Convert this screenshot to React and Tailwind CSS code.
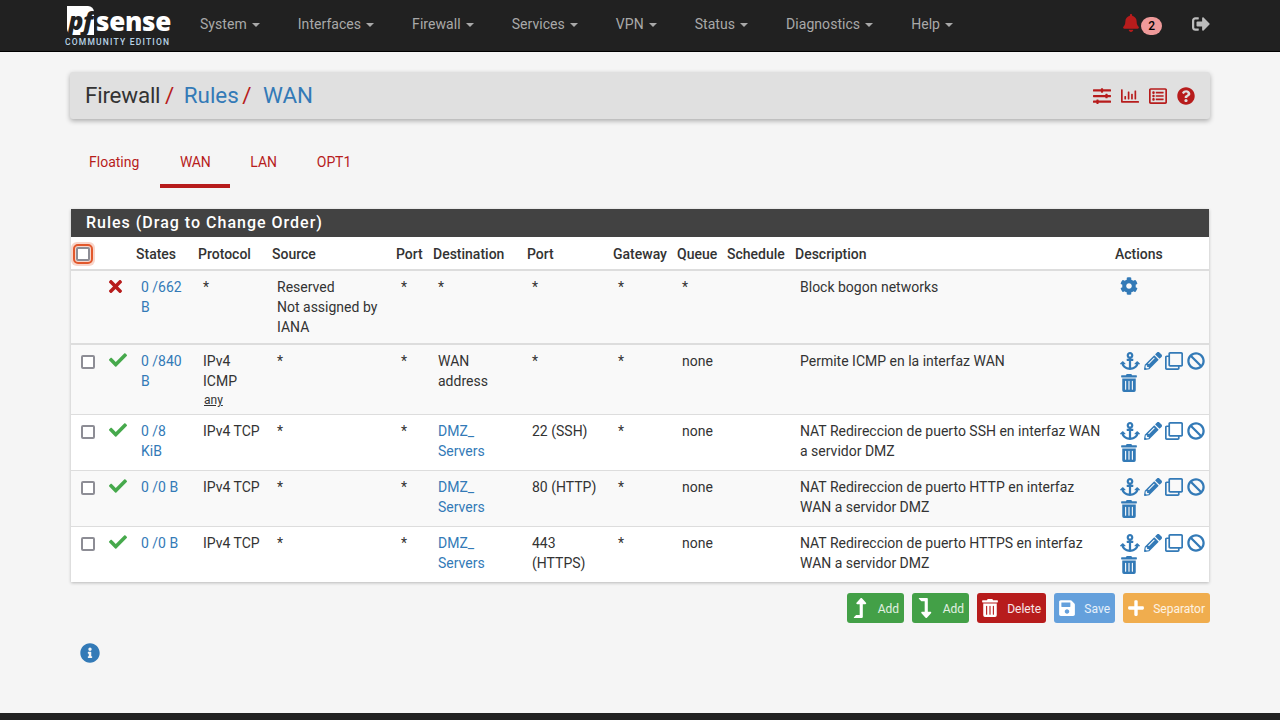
import {
  FaAnchor, FaBan, FaBell, FaCheck, FaCog, FaInfoCircle, FaLevelDownAlt, FaLevelUpAlt, FaPencilAlt,
  FaPlus, FaQuestionCircle, FaRegClone, FaRegListAlt, FaRegChartBar, FaSave, FaSignOutAlt, FaSlidersH, FaTimes, FaTrashAlt,
} from 'react-icons/fa'

const navItems = ['System', 'Interfaces', 'Firewall', 'Services', 'VPN', 'Status', 'Diagnostics', 'Help']

const tabs = ['Floating', 'WAN', 'LAN', 'OPT1']

const columns = [
  ['', 'w-[32px]'],
  ['', 'w-[28px]'],
  ['States', 'w-[62px]'],
  ['Protocol', 'w-[74px]'],
  ['Source', 'w-[124px]'],
  ['Port', 'w-[37px]'],
  ['Destination', 'w-[94px]'],
  ['Port', 'w-[86px]'],
  ['Gateway', 'w-[64px]'],
  ['Queue', 'w-[50px]'],
  ['Schedule', 'w-[68px]'],
  ['Description', 'w-[320px]'],
  ['Actions', 'w-[99px]'],
]

const rules = [
  {
    blocked: true,
    states: ['0 /662', 'B'],
    protocol: ['*'],
    source: ['Reserved', 'Not assigned by', 'IANA'],
    dest: ['*'],
    port: ['*'],
    queue: '*',
    description: 'Block bogon networks',
    border: 'border-b-2 border-[#dddddd]',
    bg: 'bg-[#f9f9f9]',
  },
  {
    states: ['0 /840', 'B'],
    protocol: ['IPv4', 'ICMP'],
    any: true,
    source: ['*'],
    dest: ['WAN', 'address'],
    port: ['*'],
    queue: 'none',
    description: 'Permite ICMP en la interfaz WAN',
    bg: 'bg-[#f9f9f9]',
  },
  {
    states: ['0 /8', 'KiB'],
    protocol: ['IPv4 TCP'],
    source: ['*'],
    dest: ['DMZ_', 'Servers'],
    destLink: true,
    port: ['22 (SSH)'],
    queue: 'none',
    description: 'NAT Redireccion de puerto SSH en interfaz WAN a servidor DMZ',
    bg: 'bg-white',
  },
  {
    states: ['0 /0 B'],
    protocol: ['IPv4 TCP'],
    source: ['*'],
    dest: ['DMZ_', 'Servers'],
    destLink: true,
    port: ['80 (HTTP)'],
    queue: 'none',
    description: 'NAT Redireccion de puerto HTTP en interfaz WAN a servidor DMZ',
    bg: 'bg-[#f9f9f9]',
  },
  {
    states: ['0 /0 B'],
    protocol: ['IPv4 TCP'],
    source: ['*'],
    dest: ['DMZ_', 'Servers'],
    destLink: true,
    port: ['443', '(HTTPS)'],
    queue: 'none',
    description: 'NAT Redireccion de puerto HTTPS en interfaz WAN a servidor DMZ',
    border: 'border-b-0',
    bg: 'bg-white',
  },
]

function Lines({ items }) {
  return items.map((line) => <div key={line}>{line}</div>)
}

function Logo() {
  return (
    <div className="flex flex-col w-[106px] ml-[65px] pt-[6px]">
      <div className="flex items-center h-[29px] pl-[2px]">
        <span className="flex items-center justify-center w-[28px] h-[29px] pb-[2px] bg-white text-[#212121] text-[25px] leading-[26px] font-extrabold italic tracking-[-0.5px] rounded-tr-[6px] rounded-bl-[6px] [font-family:'Open_Sans',sans-serif]">
          pf
        </span>
        <span className="text-white text-[26px] leading-none font-extrabold ml-[2px] tracking-[-0.3px] [font-family:'Open_Sans',sans-serif]">
          sense
        </span>
      </div>
      <div className="text-[#b9d3e6] text-[8.5px] leading-[10px] font-medium tracking-[1.2px] mt-[2px] whitespace-nowrap">
        COMMUNITY EDITION
      </div>
    </div>
  )
}

function NavBar() {
  return (
    <nav className="flex items-stretch h-[52px] shrink-0 bg-[#212121] border-b border-black">
      <Logo />
      <ul className="flex ml-[14px]">
        {navItems.map((item) => (
          <li key={item} className="flex items-center gap-[4px] px-[15px] pb-[3px] mr-[8px] text-[14px] tracking-[0.05px] text-[#a9a9a9]">
            {item}
            <span className="w-0 h-0 ml-[1px] mt-[1px] border-x-[4px] border-x-transparent border-t-[4px] border-t-[#a9a9a9]" />
          </li>
        ))}
      </ul>
      <div className="flex items-start ml-auto">
        <div className="flex items-start pt-[14px]">
          <FaBell className="text-[#b71c1c] text-[18px]" />
          <span className="ml-[1px] mt-[3px] px-[7px] h-[18px] leading-[18px] rounded-full bg-[#ef9a9a] text-black text-[12px] font-medium">2</span>
        </div>
        <FaSignOutAlt className="mt-[15px] ml-[30px] mr-[70px] text-[18px] text-[#bdbdbd]" />
      </div>
    </nav>
  )
}

function BreadcrumbBar() {
  return (
    <div className="flex items-center justify-between h-[47px] mx-[70px] mt-[20px] pl-[15px] pr-[15px] bg-[#e0e0e0] rounded-[3px] shadow-[0_2px_5px_rgba(0,0,0,0.3)]">
      <h1 className="text-[22.4px] leading-none text-[#333333] whitespace-nowrap">
        <span className="tracking-[-0.2px]">Firewall</span>
        <span className="text-[#b71c1c] ml-[-1px]"> / </span>
        <span className="text-[#337ab7] ml-[4px]">Rules</span>
        <span className="text-[#b71c1c] ml-[-2px]"> / </span>
        <span className="text-[#337ab7] ml-[6px]">WAN</span>
      </h1>
      <div className="flex items-center gap-[10px] text-[#b71c1c] text-[18px]">
        <FaSlidersH />
        <FaRegChartBar />
        <FaRegListAlt />
        <FaQuestionCircle />
      </div>
    </div>
  )
}

function Tabs() {
  return (
    <ul className="flex mt-[20px] ml-[69px] h-[49px]">
      <li className="w-[91px] pl-[20px] pt-[13px] text-[14px] leading-[20px] text-[#b71c1c] border-b-[4px] border-transparent">{tabs[0]}</li>
      <li className="px-[20px] pt-[13px] text-[14px] leading-[20px] text-[#b71c1c] border-b-[4px] border-[#b71c1c] tracking-[-0.3px]">{tabs[1]}</li>
      <li className="px-[20px] pt-[13px] text-[14px] leading-[20px] text-[#b71c1c] border-b-[4px] border-transparent tracking-[-0.1px]">{tabs[2]}</li>
      <li className="px-[20px] pt-[13px] text-[14px] leading-[20px] text-[#b71c1c] border-b-[4px] border-transparent tracking-[-0.1px]">{tabs[3]}</li>
    </ul>
  )
}

function RuleRow({ rule }) {
  const cell = 'align-top pt-[6px] pb-[6px]'
  return (
    <tr className={`${rule.bg} ${rule.border || 'border-b border-[#dddddd]'}`}>
      <td className={`${cell} pl-[10px]`}>
        {!rule.blocked && <input type="checkbox" readOnly className="block mt-[4px] w-[14px] h-[14px] appearance-none bg-white border-2 border-[#8d8d95] rounded-[2px]" />}
      </td>
      <td className={`${cell} ${rule.blocked ? 'pl-[3px]' : 'pl-[6px]'}`}>
        {rule.blocked ? <FaTimes className="text-[#b71c1c] text-[19px]" /> : <FaCheck className="text-[#46a94c] text-[18px]" />}
      </td>
      <td className={`${cell} pl-[10px] text-[#337ab7]`}><Lines items={rule.states} /></td>
      <td className={`${cell} pl-[10px]`}>
        <Lines items={rule.protocol} />
        {rule.any && <div className="text-[12px] leading-[16px] pt-[1px] underline pl-[1px]">any</div>}
      </td>
      <td className={`${cell} pl-[10px]`}><Lines items={rule.source} /></td>
      <td className={`${cell} pl-[10px]`}>*</td>
      <td className={`${cell} pl-[10px] ${rule.destLink ? 'text-[#337ab7]' : ''}`}><Lines items={rule.dest} /></td>
      <td className={`${cell} pl-[10px]`}><Lines items={rule.port} /></td>
      <td className={`${cell} pl-[10px]`}>*</td>
      <td className={`${cell} pl-[10px]`}>{rule.queue}</td>
      <td className={cell}></td>
      <td className={`${cell} pl-[10px] pr-[4px]`}>{rule.description}</td>
      <td className={`${cell} pl-[10px]`}>
        {rule.blocked ? (
          <FaCog className="text-[#337ab7] text-[18px]" />
        ) : (
          <div className="flex flex-wrap items-center gap-x-[3.7px] gap-y-[3px] text-[#337ab7] text-[18px] w-[90px] mb-[2px]">
            <FaAnchor className="text-[20px]" />
            <FaPencilAlt />
            <FaRegClone />
            <FaBan />
            <FaTrashAlt />
          </div>
        )}
      </td>
    </tr>
  )
}

function RulesPanel() {
  return (
    <section className="mx-[71px] mt-[21px] shadow-[0_1px_3px_rgba(0,0,0,0.25)]">
      <h2 className="h-[28px] pl-[15px] bg-[#424242] text-white text-[16px] leading-[28px] font-medium tracking-[1px]">
        Rules (Drag to Change Order)
      </h2>
      <table className="w-full table-fixed border-collapse text-[14px] leading-[20px] text-[#333333]">
        <colgroup>
          {columns.map(([name, width], i) => <col key={i} className={width} />)}
        </colgroup>
        <thead>
          <tr className="h-[33px] bg-white border-b-2 border-[#dddddd]">
            {columns.map(([name], i) => (
              <th key={i} className="pl-[5px] pt-[2px] text-left font-medium whitespace-nowrap">
                {i === 0 ? (
                  <input type="checkbox" readOnly className="block w-[14px] h-[14px] appearance-none bg-white border-2 border-[#8d8d95] rounded-[2px] outline-2 outline-[#e2582c] outline-offset-1 shadow-[0_0_0_5px_rgba(226,88,44,0.25)]" />
                ) : name}
              </th>
            ))}
          </tr>
        </thead>
        <tbody>
          {rules.map((rule) => <RuleRow key={rule.description} rule={rule} />)}
        </tbody>
      </table>
    </section>
  )
}

function ActionButton({ icon, label, color, width }) {
  return (
    <button className={`flex items-center justify-between h-[30px] pl-[4px] pr-[5px] ${width} ${color} text-[12px] rounded-[3px]`}>
      {icon}
      <span className="pt-[1px]">{label}</span>
    </button>
  )
}

function Buttons() {
  return (
    <div className="flex justify-end gap-[8px] mx-[70px] mt-[11px]">
      <ActionButton icon={<FaLevelUpAlt className="text-[20px] -ml-[1px] text-white" />} label="Add" color="bg-[#43a047] text-white/85" width="w-[57px]" />
      <ActionButton icon={<FaLevelDownAlt className="text-[20px] -ml-[1px] text-white" />} label="Add" color="bg-[#43a047] text-white/85" width="w-[57px]" />
      <ActionButton icon={<FaTrashAlt className="text-[18px] text-white" />} label="Delete" color="bg-[#b71c1c] text-white/90" width="w-[69px]" />
      <ActionButton icon={<FaSave className="text-[18px] text-white" />} label="Save" color="bg-[#64a0dc] text-white/85" width="w-[61px]" />
      <ActionButton icon={<FaPlus className="text-[18px] text-white" />} label="Separator" color="bg-[#f0ad4e] text-white/85" width="w-[87px]" />
    </div>
  )
}

export default function App() {
  return (
    <div className="flex flex-col h-[720px] overflow-hidden bg-[#f5f5f5] [font-family:Roboto,sans-serif]">
      <NavBar />
      <main className="flex-1">
        <BreadcrumbBar />
        <Tabs />
        <RulesPanel />
        <Buttons />
        <FaInfoCircle className="ml-[80px] mt-[20px] text-[20px] text-[#337ab7]" />
      </main>
      <div className="h-[7px] shrink-0 bg-[#212121]" />
    </div>
  )
}
